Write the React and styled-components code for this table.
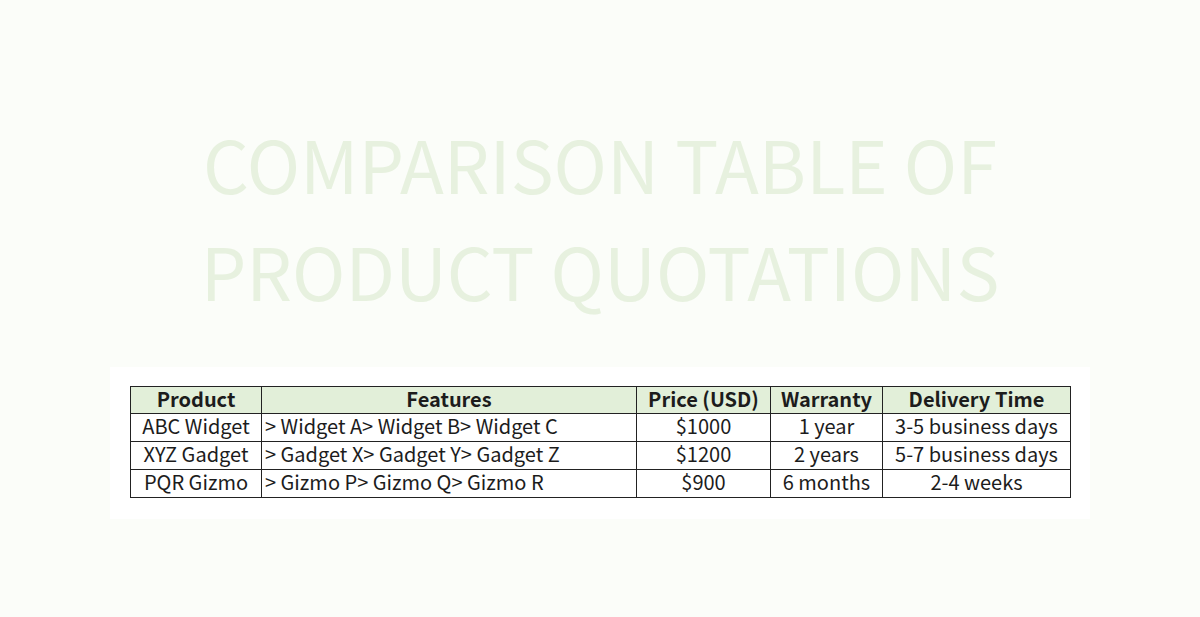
import React from 'react';
import styled, { createGlobalStyle } from 'styled-components';

const GlobalStyle = createGlobalStyle`
  html, body {
    margin: 0;
    padding: 0;
    background: #fbfdf9;
  }
`;

const Page = styled.div`
  width: 1200px;
  height: 617px;
  overflow: hidden;
  background: #fbfdf9;
  font-family: 'Noto Sans CJK SC', 'Noto Sans', sans-serif;
  display: flex;
  flex-direction: column;
  align-items: center;
  padding-top: 109px;
  box-sizing: border-box;
`;

const Title = styled.h1`
  margin: 0;
  font-size: 72px;
  line-height: 107px;
  font-weight: 400;
  color: #e7f1df;
  text-align: center;
  text-transform: uppercase;
`;

const Card = styled.div`
  margin-top: 44px;
  width: 980px;
  box-sizing: border-box;
  padding: 19px 20px 21px;
  background: #ffffff;
`;

const Table = styled.table`
  width: 940px;
  border-collapse: collapse;
  table-layout: fixed;
  font-size: 20px;
  color: #1c1c1c;
`;

const HeadCell = styled.th`
  background: #e2efd9;
  border: 1px solid #222;
  font-weight: 700;
  padding: 0 0 3px;
  line-height: 23px;
  text-align: center;
  white-space: nowrap;
`;

const Cell = styled.td`
  border: 1px solid #222;
  padding: 0 ${p => (p.$left ? '3px' : '0')} 3px;
  line-height: 24px;
  text-align: ${p => (p.$left ? 'left' : 'center')};
  white-space: nowrap;
`;

const columns = [
  { label: 'Product', width: 131 },
  { label: 'Features', width: 375 },
  { label: 'Price (USD)', width: 134 },
  { label: 'Warranty', width: 112 },
  { label: 'Delivery Time', width: 188 },
];

const rows = [
  ['ABC Widget', '> Widget A> Widget B> Widget C', '$1000', '1 year', '3-5 business days'],
  ['XYZ Gadget', '> Gadget X> Gadget Y> Gadget Z', '$1200', '2 years', '5-7 business days'],
  ['PQR Gizmo', '> Gizmo P> Gizmo Q> Gizmo R', '$900', '6 months', '2-4 weeks'],
];

export default function App() {
  return (
    <Page>
      <GlobalStyle />
      <Title>
        Comparison Table Of
        <br />
        Product Quotations
      </Title>
      <Card>
        <Table>
          <colgroup>
            {columns.map(c => (
              <col key={c.label} style={{ width: c.width }} />
            ))}
          </colgroup>
          <thead>
            <tr>
              {columns.map(c => (
                <HeadCell key={c.label}>{c.label}</HeadCell>
              ))}
            </tr>
          </thead>
          <tbody>
            {rows.map(r => (
              <tr key={r[0]}>
                {r.map((v, i) => (
                  <Cell key={i} $left={i === 1}>{v}</Cell>
                ))}
              </tr>
            ))}
          </tbody>
        </Table>
      </Card>
    </Page>
  );
}
